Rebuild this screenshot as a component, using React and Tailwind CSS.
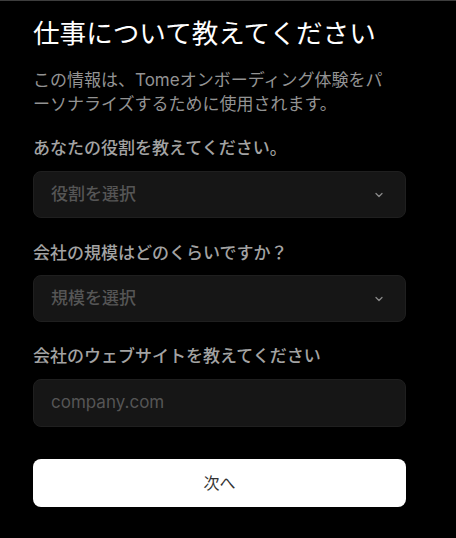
import React from "react";

const Chevron = () => (
  <svg width="12" height="12" viewBox="0 0 24 24" fill="none" stroke="#8a8a8a" strokeWidth="2.5" strokeLinecap="round" strokeLinejoin="round">
    <path d="M6 9l6 6 6-6" />
  </svg>
);

const SelectBox = ({ placeholder }) => (
  <div className="flex h-[47px] w-full items-center justify-between rounded-lg border border-[#1f1f1f] bg-[#161616] pl-[17px] pr-[20px]">
    <span className="text-[17px] font-medium text-[#555555]">{placeholder}</span>
    <Chevron />
  </div>
);

const Label = ({ children }) => (
  <div className="text-[17px] leading-[24px] font-medium text-[#a3a3a3]">{children}</div>
);

export default function App() {
  return (
    <div
      className="min-h-[538px] w-[456px] border-t border-[#3d3d3d] bg-black"
      style={{ fontFamily: '"Inter", "Noto Sans CJK JP", sans-serif' }}
    >
      <div className="flex w-[406px] flex-col pl-[33px] pt-[14px]">
        <h1 className="text-[26.6px] leading-[36px] font-normal text-white">仕事について教えてください</h1>
        <p className="mt-[17px] w-[358px] text-[17px] leading-[24px] text-[#939393]">
          この情報は、Tomeオンボーディング体験をパーソナライズするために使用されます。
        </p>

        <div className="mt-[20px]">
          <Label>あなたの役割を教えてください。</Label>
        </div>
        <div className="mt-[11px]">
          <SelectBox placeholder="役割を選択" />
        </div>

        <div className="mt-[23px]">
          <Label>会社の規模はどのくらいですか？</Label>
        </div>
        <div className="mt-[10px]">
          <SelectBox placeholder="規模を選択" />
        </div>

        <div className="mt-[22px]">
          <Label>会社のウェブサイトを教えてください</Label>
        </div>
        <div className="mt-[11px] flex h-[48px] items-center rounded-lg border border-[#1f1f1f] bg-[#161616] pl-[17px]">
          <span className="text-[17px] text-[#555555]">company.com</span>
        </div>

        <button className="mt-[32px] h-[48px] w-full rounded-lg bg-white text-[16px] text-[#333333]">
          次へ
        </button>
      </div>
    </div>
  );
}
